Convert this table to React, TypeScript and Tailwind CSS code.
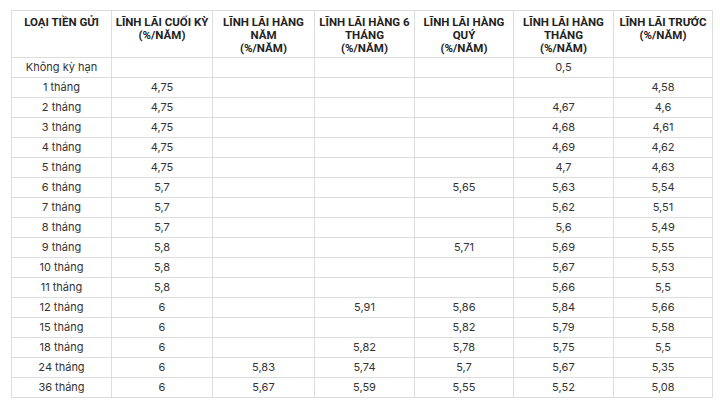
const headers = [
  ["LOẠI TIỀN GỬI"],
  ["LĨNH LÃI CUỐI KỲ", "(%/NĂM)"],
  ["LĨNH LÃI HÀNG", "NĂM", "(%/NĂM)"],
  ["LĨNH LÃI HÀNG 6", "THÁNG", "(%/NĂM)"],
  ["LĨNH LÃI HÀNG", "QUÝ", "(%/NĂM)"],
  ["LĨNH LÃI HÀNG", "THÁNG", "(%/NĂM)"],
  ["LĨNH LÃI TRƯỚC", "(%/NĂM)"],
];

const rows: string[][] = [
  ["Không kỳ hạn", "", "", "", "", "0,5", ""],
  ["1 tháng", "4,75", "", "", "", "", "4,58"],
  ["2 tháng", "4,75", "", "", "", "4,67", "4,6"],
  ["3 tháng", "4,75", "", "", "", "4,68", "4,61"],
  ["4 tháng", "4,75", "", "", "", "4,69", "4,62"],
  ["5 tháng", "4,75", "", "", "", "4,7", "4,63"],
  ["6 tháng", "5,7", "", "", "5,65", "5,63", "5,54"],
  ["7 tháng", "5,7", "", "", "", "5,62", "5,51"],
  ["8 tháng", "5,7", "", "", "", "5,6", "5,49"],
  ["9 tháng", "5,8", "", "", "5,71", "5,69", "5,55"],
  ["10 tháng", "5,8", "", "", "", "5,67", "5,53"],
  ["11 tháng", "5,8", "", "", "", "5,66", "5,5"],
  ["12 tháng", "6", "", "5,91", "5,86", "5,84", "5,66"],
  ["15 tháng", "6", "", "", "5,82", "5,79", "5,58"],
  ["18 tháng", "6", "", "5,82", "5,78", "5,75", "5,5"],
  ["24 tháng", "6", "5,83", "5,74", "5,7", "5,67", "5,35"],
  ["36 tháng", "6", "5,67", "5,59", "5,55", "5,52", "5,08"],
];

const widths = ["w-[100px]", "w-[101px]", "w-[102px]", "w-[100px]", "w-[99px]", "w-[100px]", "w-[99px]"];

export default function App() {
  return (
    <div className="h-[406px] w-[720px] overflow-hidden bg-white pl-[11px] pt-[10px] font-['Inter','Liberation_Sans',sans-serif]">
      <table className="table-fixed border-collapse text-[11px] text-[#333]">
        <thead>
          <tr>
            {headers.map((h, i) => (
              <th
                key={i}
                className={`${widths[i]} h-[47px] whitespace-nowrap border border-[#ddd] p-0 pt-[5px] align-top text-center font-['Roboto','Inter',sans-serif] text-[11.5px] font-bold leading-[13px] text-[#222]`}
              >
                {h.map((line) => (
                  <div key={line}>{line}</div>
                ))}
              </th>
            ))}
          </tr>
        </thead>
        <tbody>
          {rows.map((r) => (
            <tr key={r[0]}>
              {r.map((c, i) => (
                <td key={i} className="h-[20px] border border-[#ddd] p-0 text-center leading-[19px]">
                  {c}
                </td>
              ))}
            </tr>
          ))}
        </tbody>
      </table>
    </div>
  );
}
